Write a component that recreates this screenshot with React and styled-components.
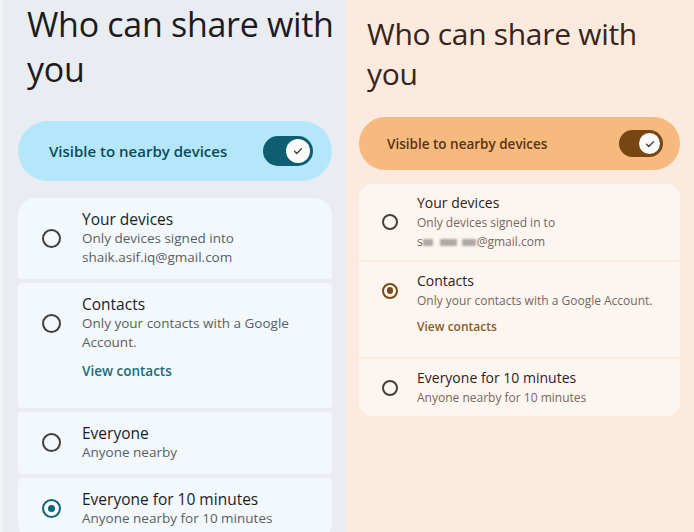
import React from 'react';
import styled, { createGlobalStyle } from 'styled-components';

const GlobalStyle = createGlobalStyle`
  html, body {
    margin: 0;
    padding: 0;
  }
  body {
    font-family: "Open Sans", Roboto, sans-serif;
    background: #ffffff;
  }
`;

const blue = {
  bg: '#e9edf1',
  pad: '1px 14px 0 18px',
  title: '#1c1c1f',
  titleSize: '34px',
  titleLine: '45px',
  titleIndent: '9px',
  titleTop: '1px',
  titleGap: '29px',
  pill: '#b5e7fb',
  pillText: '#0d4a5a',
  pillH: '60px',
  pillPad: '0 19px 0 31px',
  pillFont: '15px',
  track: '#0d5e71',
  trackW: '50px',
  trackH: '30px',
  thumb: '24px',
  cardGap: '17px',
  row: '#f2f8fb',
  rowGap: '4px',
  outerRadius: '18px',
  innerRadius: '4px',
  rowPad: '11px 16px 12px 24px',
  radio: '19px',
  radioBorder: '#3d3f42',
  selected: '#0e6577',
  textGap: '21px',
  heading: '#1c1c1f',
  headSize: '15.5px',
  headLine: '20px',
  sub: '#5b5e61',
  subSize: '13.5px',
  subLine: '19px',
  subTop: '0px',
  link: '#1c6c74',
  linkTop: '10px',
  linkBottom: '15px',
};

const peach = {
  bg: '#fdeadf',
  pad: '0 14px 0 13px',
  title: '#35251b',
  titleSize: '30px',
  titleLine: '40px',
  titleIndent: '8px',
  titleTop: '14px',
  titleGap: '23px',
  pill: '#f6b97e',
  pillText: '#5a3311',
  pillH: '53px',
  pillPad: '0 17px 0 28px',
  pillFont: '13.5px',
  track: '#774612',
  trackW: '44px',
  trackH: '27px',
  thumb: '21px',
  cardGap: '14px',
  row: '#fdf6f0',
  rowGap: '2px',
  outerRadius: '14px',
  innerRadius: '0px',
  rowPad: '10px 14px 10px 23px',
  radio: '16px',
  radioBorder: '#4a3f38',
  selected: '#7a4b16',
  textGap: '19px',
  heading: '#2e221b',
  headSize: '14px',
  headLine: '18px',
  sub: '#75675e',
  subSize: '12px',
  subLine: '17px',
  subTop: '2px',
  link: '#875a26',
  linkTop: '9px',
  linkBottom: '12px',
};

const Screen = styled.div`
  display: grid;
  grid-template-columns: 346px 348px;
  width: 694px;
  height: 532px;
  overflow: hidden;
`;

const Panel = styled.section`
  background: ${(p) => p.$t.bg};
  padding: ${(p) => p.$t.pad};
  box-sizing: border-box;
  overflow: hidden;
  box-shadow: ${(p) => (p.$edge ? 'inset 3px 0 0 #f1f4f7' : 'none')};
`;

const Title = styled.h1`
  margin: ${(p) => `${p.$t.titleTop} 0 ${p.$t.titleGap} ${p.$t.titleIndent}`};
  font-family: "Open Sans", sans-serif;
  font-weight: 400;
  font-size: ${(p) => p.$t.titleSize};
  line-height: ${(p) => p.$t.titleLine};
  color: ${(p) => p.$t.title};
  letter-spacing: -0.3px;
  white-space: nowrap;
`;

const Pill = styled.div`
  display: flex;
  align-items: center;
  justify-content: space-between;
  height: ${(p) => p.$t.pillH};
  padding: ${(p) => p.$t.pillPad};
  border-radius: 999px;
  background: ${(p) => p.$t.pill};
  color: ${(p) => p.$t.pillText};
  font-size: ${(p) => p.$t.pillFont};
  font-weight: 600;
`;

const Track = styled.div`
  display: flex;
  align-items: center;
  justify-content: flex-end;
  width: ${(p) => p.$t.trackW};
  height: ${(p) => p.$t.trackH};
  padding: 0 3px;
  box-sizing: border-box;
  border-radius: 999px;
  background: ${(p) => p.$t.track};
`;

const Thumb = styled.div`
  display: flex;
  align-items: center;
  justify-content: center;
  width: ${(p) => p.$t.thumb};
  height: ${(p) => p.$t.thumb};
  border-radius: 50%;
  background: #fbfbfb;
`;

const List = styled.div`
  display: flex;
  flex-direction: column;
  gap: ${(p) => p.$t.rowGap};
  margin-top: ${(p) => p.$t.cardGap};
  border-radius: ${(p) => p.$t.outerRadius};
  overflow: hidden;
`;

const Row = styled.div`
  display: flex;
  flex-direction: column;
  padding: ${(p) => p.$t.rowPad};
  background: ${(p) => p.$t.row};
  border-radius: ${(p) => p.$t.innerRadius};
`;

const Main = styled.div`
  display: flex;
  align-items: center;
  gap: ${(p) => p.$t.textGap};
`;

const Radio = styled.span`
  flex: none;
  display: flex;
  align-items: center;
  justify-content: center;
  width: ${(p) => p.$t.radio};
  height: ${(p) => p.$t.radio};
  box-sizing: border-box;
  border-radius: 50%;
  border: 2px solid ${(p) => (p.$on ? p.$t.selected : p.$t.radioBorder)};

  &::after {
    content: '';
    display: ${(p) => (p.$on ? 'block' : 'none')};
    width: 52%;
    height: 52%;
    border-radius: 50%;
    background: ${(p) => p.$t.selected};
  }
`;

const Texts = styled.div`
  display: flex;
  flex-direction: column;
`;

const Heading = styled.div`
  font-size: ${(p) => p.$t.headSize};
  line-height: ${(p) => p.$t.headLine};
  color: ${(p) => p.$t.heading};
`;

const Sub = styled.div`
  margin-top: ${(p) => p.$t.subTop};
  font-size: ${(p) => p.$t.subSize};
  line-height: ${(p) => p.$t.subLine};
  color: ${(p) => p.$t.sub};
`;

const Link = styled.div`
  margin: ${(p) => `${p.$t.linkTop} 0 ${p.$t.linkBottom}`};
  padding-left: ${(p) => `calc(${p.$t.radio} + ${p.$t.textGap})`};
  font-size: ${(p) => p.$t.subSize};
  line-height: ${(p) => p.$t.subLine};
  font-weight: 600;
  color: ${(p) => p.$t.link};
`;

const Blur = styled.span`
  display: inline-block;
  width: ${(p) => p.$w}px;
  height: 7px;
  margin-right: ${(p) => p.$gap}px;
  background: #9d948e;
  filter: blur(1.2px);
  opacity: 0.8;
  vertical-align: 0;
`;

const Check = () => (
  <svg width="12" height="12" viewBox="0 0 24 24" fill="none">
    <path d="M5 12.5l4.5 4.5L19 7.5" stroke="#3a3a3a" strokeWidth="2.4" strokeLinecap="round" strokeLinejoin="round" />
  </svg>
);

const Toggle = ({ t }) => (
  <Track $t={t}>
    <Thumb $t={t}>
      <Check />
    </Thumb>
  </Track>
);

const Option = ({ t, on, title, children, link }) => (
  <Row $t={t}>
    <Main $t={t}>
      <Radio $t={t} $on={on} />
      <Texts>
        <Heading $t={t}>{title}</Heading>
        {children}
      </Texts>
    </Main>
    {link && <Link $t={t}>View contacts</Link>}
  </Row>
);

const App = () => (
  <>
    <GlobalStyle />
    <Screen>
      <Panel $t={blue} $edge>
        <Title $t={blue}>
          Who can share with
          <br />
          you
        </Title>
        <Pill $t={blue}>
          Visible to nearby devices
          <Toggle t={blue} />
        </Pill>
        <List $t={blue}>
          <Option t={blue} title="Your devices">
            <Sub $t={blue}>Only devices signed into</Sub>
            <Sub $t={blue}>shaik.asif.iq@gmail.com</Sub>
          </Option>
          <Option t={blue} title="Contacts" link>
            <Sub $t={blue}>Only your contacts with a Google</Sub>
            <Sub $t={blue}>Account.</Sub>
          </Option>
          <Option t={blue} title="Everyone">
            <Sub $t={blue}>Anyone nearby</Sub>
          </Option>
          <Option t={blue} on title="Everyone for 10 minutes">
            <Sub $t={blue}>Anyone nearby for 10 minutes</Sub>
          </Option>
        </List>
      </Panel>
      <Panel $t={peach}>
        <Title $t={peach}>
          Who can share with
          <br />
          you
        </Title>
        <Pill $t={peach}>
          Visible to nearby devices
          <Toggle t={peach} />
        </Pill>
        <List $t={peach}>
          <Option t={peach} title="Your devices">
            <Sub $t={peach}>Only devices signed in to</Sub>
            <Sub $t={peach}>
              s<Blur $w={10} $gap={7} />
              <Blur $w={17} $gap={5} />
              <Blur $w={14} $gap={1} />@gmail.com
            </Sub>
          </Option>
          <Option t={peach} on title="Contacts" link>
            <Sub $t={peach}>Only your contacts with a Google Account.</Sub>
          </Option>
          <Option t={peach} title="Everyone for 10 minutes">
            <Sub $t={peach}>Anyone nearby for 10 minutes</Sub>
          </Option>
        </List>
      </Panel>
    </Screen>
  </>
);

export default App;
